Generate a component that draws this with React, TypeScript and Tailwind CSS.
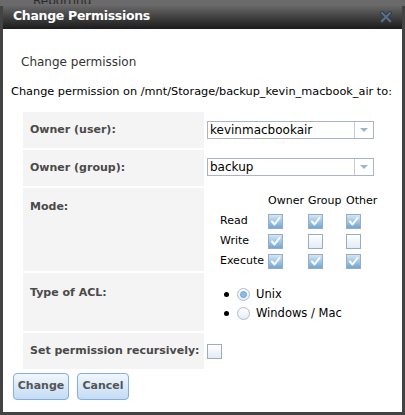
import React from "react";

const Check = ({ on }: { on: boolean }) => (
  <div
    className={
      "w-[15px] h-[15px] border border-[#9aabc2] flex items-center justify-center " +
      (on
        ? "bg-gradient-to-b from-[#d3e6f6] to-[#6fa6d6]"
        : "bg-gradient-to-b from-[#ffffff] to-[#e3ebf4]")
    }
  >
    {on && (
      <svg width="11" height="11" viewBox="0 0 11 11">
        <path d="M2 5.5 L4.5 8.5 L9.5 2" fill="none" stroke="#ffffff" strokeWidth="2" strokeLinecap="round" strokeLinejoin="round" />
      </svg>
    )}
  </div>
);

const Radio = ({ on }: { on: boolean }) => (
  <div className="w-[13px] h-[13px] rounded-full border border-[#aebbcc] bg-gradient-to-b from-[#ffffff] to-[#e6edf5] flex items-center justify-center">
    {on && <div className="w-[7px] h-[7px] rounded-full bg-[#8dbbe2] border border-[#6fa3d3]" />}
  </div>
);

const Select = ({ value }: { value: string }) => (
  <div className="w-[167px] h-[18px] border border-[#aab4c6] bg-white flex items-stretch">
    <div className="flex-1 pl-[2px] text-[12px] leading-[16px] text-black">{value}</div>
    <div className="w-[19px] border-l border-[#c4ccd8] flex items-center justify-center">
      <svg width="8" height="5" viewBox="0 0 8 5">
        <path d="M0 0 L8 0 L4 4 Z" fill="#9fb3cc" />
      </svg>
    </div>
  </div>
);

const Label = ({ children }: { children: React.ReactNode }) => (
  <div className="w-[181px] bg-[#f4f4f4] pl-[7px] font-bold text-[11px] text-[#4a4a4a]">{children}</div>
);

const Bullet = () => (
  <span className="w-[14px] flex items-center pl-[1px]">
    <span className="w-[5px] h-[5px] rounded-full bg-black" />
  </span>
);

export default function App() {
  const font = { fontFamily: '"DejaVu Sans", Verdana, sans-serif' };
  return (
    <div className="w-[405px] h-[415px] bg-[#434343] relative overflow-hidden" style={font}>
      <div className="absolute left-0 top-0 w-[405px] h-[6px] bg-[#6a6a6a] overflow-hidden">
        <div className="absolute left-[33px] top-[-6px] text-[12px] leading-[14px] text-[#2a2a2a]">Reporting</div>
      </div>
      <div className="absolute left-[3px] top-[4px] w-[399px] h-[408px] flex flex-col">
        <div className="h-[25px] bg-gradient-to-b from-[#6e6e6e] to-[#1c1c1c] flex items-center justify-between pl-[10px] pr-[10px]">
          <div className="text-white font-bold text-[12.5px] tracking-[-0.3px]">Change Permissions</div>
          <svg width="12" height="12" viewBox="0 0 12 12">
            <path d="M2 2 L10 10 M10 2 L2 10" stroke="#2f3b47" strokeWidth="4" strokeLinecap="square" />
            <path d="M2 2 L10 10 M10 2 L2 10" stroke="#5a7086" strokeWidth="2" strokeLinecap="square" />
          </svg>
        </div>
        <div className="flex-1 bg-white flex flex-col text-[11px] text-[#111]">
          <div className="pl-[18px] pt-[26px] text-[#333] text-[12px] leading-[15px]">Change permission</div>
          <div className="pl-[8px] pt-[14px] text-[11.3px] leading-[15px] text-black">Change permission on /mnt/Storage/backup_kevin_macbook_air to:</div>
          <div className="pl-[20px] pt-[13px] flex flex-col gap-[2px]">
            <div className="flex h-[36px]">
              <Label><div className="leading-[36px]">Owner (user):</div></Label>
              <div className="pl-[3px] pt-[9px]"><Select value="kevinmacbookair" /></div>
            </div>
            <div className="flex h-[36px]">
              <Label><div className="leading-[36px]">Owner (group):</div></Label>
              <div className="pl-[3px] pt-[8px]"><Select value="backup" /></div>
            </div>
            <div className="flex h-[83px]">
              <Label><div className="pt-[11px]">Mode:</div></Label>
              <div className="pl-[16px] pt-[3px] text-[11px] text-black">
                <div className="grid grid-cols-[48px_40px_38px_40px] auto-rows-[20px] items-center">
                  <div />
                  <div>Owner</div>
                  <div>Group</div>
                  <div>Other</div>
                  <div>Read</div>
                  <Check on />
                  <Check on />
                  <Check on />
                  <div>Write</div>
                  <Check on />
                  <Check on={false} />
                  <Check on={false} />
                  <div>Execute</div>
                  <Check on />
                  <Check on />
                  <Check on />
                </div>
              </div>
            </div>
            <div className="flex h-[58px]">
              <Label><div className="pt-[12px]">Type of ACL:</div></Label>
              <div className="pl-[19px] pt-[12px] text-[11.5px] text-black flex flex-col">
                <div className="flex items-center h-[19px]">
                  <Bullet />
                  <Radio on />
                  <span className="pl-[6px]">Unix</span>
                </div>
                <div className="flex items-center h-[19px]">
                  <Bullet />
                  <Radio on={false} />
                  <span className="pl-[6px]">Windows / Mac</span>
                </div>
              </div>
            </div>
            <div className="flex h-[36px]">
              <Label><div className="leading-[36px]">Set permission recursively:</div></Label>
              <div className="pl-[3px] pt-[11px]"><Check on={false} /></div>
            </div>
          </div>
          <div className="flex gap-[8px] pl-[10px] pt-[4px]">
            <button className="w-[56px] h-[27px] rounded-[4px] border border-[#84aedb] bg-gradient-to-b from-[#f1f7fd] to-[#c3dcf4] font-bold text-[11px] text-[#555]">Change</button>
            <button className="w-[52px] h-[27px] rounded-[4px] border border-[#84aedb] bg-gradient-to-b from-[#f1f7fd] to-[#c3dcf4] font-bold text-[11px] text-[#555]">Cancel</button>
          </div>
        </div>
      </div>
    </div>
  );
}
